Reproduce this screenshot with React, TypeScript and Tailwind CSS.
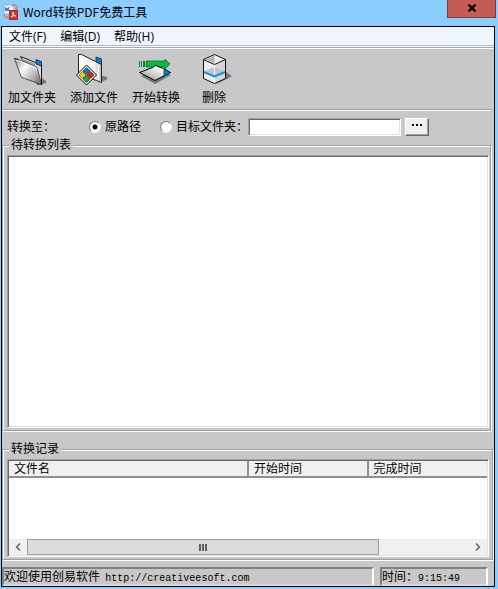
import React from 'react';

const sunken =
  'border border-t-[#a0a0a0] border-l-[#a0a0a0] border-r-white border-b-white shadow-[inset_1px_1px_0_#696969,inset_-1px_-1px_0_#e3e3e3]';
const group =
  'min-w-0 border border-[#a0a0a0] shadow-[1px_1px_0_#fff,inset_1px_1px_0_#fff]';
const statusPanel =
  'h-[19px] border-2 border-t-[#808080] border-l-[#808080] border-r-white border-b-[#d8d8d8] leading-4 whitespace-nowrap overflow-hidden';

function AppIcon() {
  return (
    <svg width="16" height="16" viewBox="0 0 16 16" aria-hidden="true">
      <path d="M1 1h7l3 3v6H1z" fill="#e8f1fb" stroke="#8ba7c4" strokeWidth="0.7" />
      <path d="M2 3l1 4 1-3 1 3 1-4" fill="none" stroke="#3b6db5" />
      <path d="M9 1c3-1 5 1 5 4l-2-1M1 10c0 3 2 4 4 4l-1-2" fill="none" stroke="#d9776c" strokeWidth="1.3" />
      <rect x="6.500" y="6.500" width="8" height="9" fill="#d8342b" stroke="#a92b25" />
      <path d="M8 13c3-2 3-4 2-5-1 2 1 4 3 4-2-1-4 0-5 1z" fill="none" stroke="#fff" strokeWidth="0.9" />
    </svg>
  );
}

function FolderIcon() {
  return (
    <svg className="h-9 w-12 overflow-visible" viewBox="8 52 48 36" aria-hidden="true">
      <defs>
        <linearGradient id="folder" x1="0" y1="0" x2="1" y2="0.8">
          <stop offset="0" stopColor="#8c8c8c" />
          <stop offset="0.4" stopColor="#fafafa" />
          <stop offset="0.7" stopColor="#c4c4c4" />
          <stop offset="1" stopColor="#7a7a7a" />
        </linearGradient>
      </defs>
      <path d="M41 78l5 3v2l-6 2z" fill="#777" />
      <path d="M20.500 56.500l15 6 6 2v19l-4 1z" fill="#d0d0d0" stroke="#222" />
      <path d="M22 59l13 5v2l-12-4z" fill="#999" />
      <path d="M36 59.500l5.500 2v4.500l-5.500-2z" fill="#0b7fd0" stroke="#123" strokeWidth="0.8" />
      <path d="M14.500 58.500l4 1 17 7 2 2 4 15.500-3-.5-14-5-3-1-2-5z" fill="url(#folder)" stroke="#555" />
      <path d="M38 68l3-2v14z" fill="#dedede" />
      <path d="M15.500 59.500l20 8 1 2" fill="none" stroke="#fff" strokeWidth="0.8" />
      <path d="M14.500 58.500l4 1M41.500 65v20" fill="none" stroke="#111" />
    </svg>
  );
}

function AddFileIcon() {
  return (
    <svg className="h-9 w-12 overflow-visible" viewBox="71 52 48 36" aria-hidden="true">
      <defs>
        <linearGradient id="file" x1="0" y1="0" x2="1" y2="0">
          <stop offset="0" stopColor="#fff" />
          <stop offset="0.7" stopColor="#f1f1f1" />
          <stop offset="1" stopColor="#bbb" />
        </linearGradient>
      </defs>
      <path d="M102 76h4l3 2-2 2-5 2z" fill="#777" />
      <path d="M97 57l5.500 2v6l-5.500-2z" fill="#0b7fd0" stroke="#123" strokeWidth="0.8" />
      <path d="M79.500 54.500h3l14 7 4 2 2 1v18l-5-2-18-6z" fill="url(#file)" stroke="#222" />
      <path d="M99.500 65v15" stroke="#fff" />
      <path d="M87.500 65l10 10-10 10-10-10z" fill="#fff" stroke="#000" />
      <path d="M87.500 67.500l3.500 3.500-3.500 3.500-3.500-3.500z" fill="#0878d8" stroke="#000" strokeWidth="0.5" />
      <path d="M83.500 71.500l3.500 3.500-3.500 3.500-3.500-3.500z" fill="#f5cf00" stroke="#000" strokeWidth="0.5" />
      <path d="M91.500 71.500l3.500 3.500-3.500 3.500-3.500-3.500z" fill="#e21f16" stroke="#000" strokeWidth="0.5" />
      <path d="M87.500 75.500l3.500 3.500-3.500 3.500-3.500-3.500z" fill="#13ae2b" stroke="#000" strokeWidth="0.5" />
    </svg>
  );
}

function ConvertIcon() {
  return (
    <svg className="h-9 w-12 overflow-visible" viewBox="132 52 48 36" aria-hidden="true">
      <defs>
        <linearGradient id="sheet" x1="0" y1="1" x2="1" y2="0">
          <stop offset="0" stopColor="#909090" />
          <stop offset="0.7" stopColor="#f5f5f5" />
        </linearGradient>
      </defs>
      <path d="M141 76l15-7 15 6-16 9z" fill="#777" />
      <path d="M139 61h1v6h-1zM141 61h1v6h-1zM143 61h2v6h-2z" fill="#0a8a35" />
      <path d="M146 61h19v-2l5 5-5 5v-2h-19z" fill="#08b943" stroke="#067a2c" strokeWidth="0.8" />
      <path d="M139.500 72.500l13-5 3-2 8 3 7 4-15.500 8z" fill="url(#sheet)" stroke="#000" />
      <path d="M164 69l6 3.500-6 3.500z" fill="#0885e0" stroke="#002b50" strokeWidth="0.8" />
    </svg>
  );
}

function DeleteIcon() {
  return (
    <svg className="h-9 w-10 overflow-visible" viewBox="194 52 40 36" aria-hidden="true">
      <path d="M226 72l6 4-5 3-11 5z" fill="#777" />
      <path d="M203.500 59.500l11 5 11-5v19l-11 5-11-5z" fill="#ececec" />
      <path d="M214.500 64.500l11-5v19l-11 5z" fill="#d6d6d6" />
      <path d="M205 71l9.500-4 9.500 4-9.500 4z" fill="#c2c2c2" />
      <path d="M203.500 59.500l11-5 11 5-11 5z" fill="#eee" />
      <path d="M206 59.500l8.500-4v8z" fill="#b4b4b4" />
      <path d="M214.500 65v17.500" stroke="#fff" />
      <path d="M204 72l10.500 4.500 10.500-4.500" fill="none" stroke="#0d92e8" strokeWidth="2" />
      <path d="M203.500 59.500l11-5 11 5-11 5zM203.500 59.500v19l11 5 11-5v-19" fill="none" stroke="#111" />
    </svg>
  );
}

const tools = [
  { label: '加文件夹', icon: <FolderIcon /> },
  { label: '添加文件', icon: <AddFileIcon /> },
  { label: '开始转换', icon: <ConvertIcon /> },
  { label: '删除', icon: <DeleteIcon /> },
];

function Chevron({ d }: { d: string }) {
  return (
    <svg width="6" height="8" viewBox="0 0 6 8" fill="none" stroke="#606060" strokeWidth="1.5" aria-hidden="true">
      <path d={d} />
    </svg>
  );
}

function PathOption({ label, checked }: { label: string; checked?: boolean }) {
  return (
    <label className="flex items-center gap-1">
      <input
        type="radio"
        name="target"
        defaultChecked={checked}
        className="size-3 appearance-none rounded-full border border-t-[#777] border-l-[#777] border-r-[#eee] border-b-[#eee] bg-white checked:bg-[radial-gradient(circle,#000_0_2px,#fff_3px)]"
      />
      {label}
    </label>
  );
}

export default function App() {
  return (
    <div className="flex min-h-screen flex-col bg-[#8bcdff] pr-[3px] pb-[2px] pl-px font-['Liberation_Sans','Noto_Sans_CJK_SC',sans-serif] text-xs text-black">
      <header className="flex h-[26px] items-start justify-between">
        <div className="flex h-6 items-center gap-1 pl-[2px] font-['Noto_Sans_CJK_SC',sans-serif]">
          <AppIcon />
          <h1 className="leading-4">Word转换PDF免费工具</h1>
        </div>
        <button
          type="button"
          aria-label="关闭"
          className="-mr-px flex h-[18px] w-[49px] items-center justify-center border border-t-0 border-[#7c3a3c] bg-[#c45c54] pb-[2px]"
        >
          <svg width="10" height="8" viewBox="0 0 10 8" stroke="#000" strokeWidth="2.200" aria-hidden="true">
            <path d="M1.500 0.500l7 7M8.500 0.500l-7 7" />
          </svg>
        </button>
      </header>

      <main className="flex flex-1 flex-col border border-black bg-[#c8c8c8]">
        <nav className="flex h-[18px] items-end gap-[14px] bg-[#eef5fd] pl-[7px] font-['Open_Sans','Noto_Sans_CJK_SC',sans-serif]">
          <button type="button" className="leading-4">文件(F)</button>
          <button type="button" className="leading-4">编辑(D)</button>
          <button type="button" className="leading-4">帮助(H)</button>
        </nav>
        <div className="h-1 border-y border-t-[#b4b8c4] border-b-white bg-[#a8a8a8] shadow-[inset_0_1px_0_#fff]" />

        <div className="flex h-[60px] gap-[14px] pt-[3px] pl-[6px]">
          {tools.map((tool) => (
            <button key={tool.label} type="button" className="flex flex-col items-center whitespace-nowrap">
              {tool.icon}
              <span className="leading-5">{tool.label}</span>
            </button>
          ))}
        </div>
        <div className="mr-1 h-[2px] border-t border-[#a0a0a0] bg-white" />

        <div className="flex h-[26px] items-end pb-px pl-[5px] leading-[18px]">
          <span className="w-[82px]">转换至：</span>
          <div className="w-[71px]">
            <PathOption label="原路径" checked />
          </div>
          <PathOption label="目标文件夹：" />
          <input type="text" aria-label="目标文件夹" className={'h-[18px] w-[153px] bg-white px-1 ' + sunken} />
          <button
            type="button"
            aria-label="浏览"
            className="ml-1 flex h-[18px] w-6 items-center justify-center gap-[2px] border border-t-white border-l-white border-r-[#696969] border-b-[#696969] bg-[#f0f0f0] pb-1 shadow-[inset_-1px_-1px_0_#a0a0a0]"
          >
            <i className="size-[2px] bg-black" />
            <i className="size-[2px] bg-black" />
            <i className="size-[2px] bg-black" />
          </button>
        </div>

        <fieldset className={'mr-[3px] flex flex-1 flex-col pt-[2px] pr-px pb-px pl-1 ' + group}>
          <legend className="ml-[2px] bg-[#c8c8c8] px-[2px] leading-4">待转换列表</legend>
          <div className={'h-[calc(100vh-316px)] min-h-24 bg-white ' + sunken} />
        </fieldset>

        <fieldset className={'mt-[10px] mr-px pt-[2px] pr-[3px] pb-[2px] pl-1 ' + group}>
          <legend className="ml-[2px] bg-[#c8c8c8] px-[2px] leading-4">转换记录</legend>
          <div className={'flex h-[98px] flex-col bg-white p-px ' + sunken}>
            <table className="w-full table-fixed border-collapse text-left">
              <thead>
                <tr className="h-4 bg-[#f0f0f0]">
                  {['文件名', '开始时间', '完成时间'].map((title) => (
                    <th
                      key={title}
                      className="border-r-2 border-b-2 border-[#909090] p-0 pl-[5px] leading-[14px] font-normal first:w-1/2 last:border-r-0"
                    >
                      {title}
                    </th>
                  ))}
                </tr>
              </thead>
            </table>
            <div className="mt-auto flex h-4 bg-[#f0f0f0]">
              <button type="button" aria-label="向左滚动" className="flex w-[18px] items-center justify-center">
                <Chevron d="M5 0.500L1.500 4L5 7.500" />
              </button>
              <div className="flex-1 pr-[90px]">
                <div className="flex h-4 items-center justify-center gap-px border border-[#a0a0a0] bg-[#dcdcdc]">
                  <i className="h-[7px] w-[2px] bg-[#606060]" />
                  <i className="h-[7px] w-[2px] bg-[#606060]" />
                  <i className="h-[7px] w-[2px] bg-[#606060]" />
                </div>
              </div>
              <button type="button" aria-label="向右滚动" className="flex w-[18px] items-center justify-center">
                <Chevron d="M1 0.500L4.500 4L1 7.500" />
              </button>
            </div>
          </div>
        </fieldset>

        <footer className="flex gap-[6px] pt-[7px] pr-[6px]">
          <div className={'flex-1 ' + statusPanel}>
            欢迎使用创易软件{' '}
            <a href="http://creativeesoft.com" className="ml-[2px] font-['Liberation_Mono',monospace] text-[10px]">
              http://creativeesoft.com
            </a>
          </div>
          <div className={'w-[108px] ' + statusPanel}>
            时间：<span className="font-['Liberation_Mono',monospace] text-[10px]">9:15:49</span>
          </div>
        </footer>
      </main>
    </div>
  );
}
